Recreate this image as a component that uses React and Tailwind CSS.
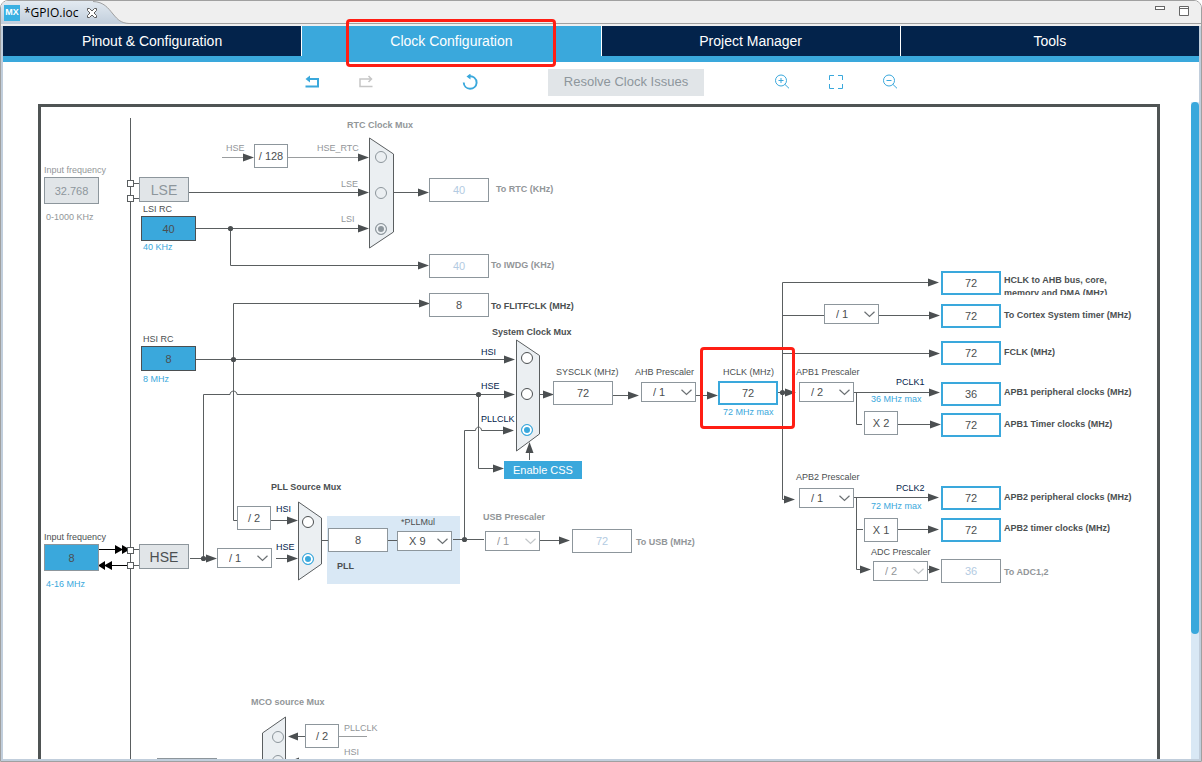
import { useState } from "react";

// top left corner of the diagram area, all node coordinates are relative to the window
const ORIGIN = { x: 41, y: 107 };
const at = (x, y) => ({ left: x - ORIGIN.x, top: y - ORIGIN.y });

const TABS = ["Pinout & Configuration", "Clock Configuration", "Project Manager", "Tools"];

const fieldTones = {
  output: "border-2 border-[#3aa8dc] bg-white text-[#4b4f51]",
  plain: "border border-[#8d969c] bg-white text-[#4b4f51]",
  disabled: "border border-[#8d969c] bg-white text-[#b3cbe2]",
  gray: "border border-[#8d969c] bg-[#e1e5e8] text-[#8d969c]",
  source: "border border-[#4b4f51] bg-[#3aa8dc] text-[#4b4f51]",
  external: "border border-[#8d969c] bg-[#3aa8dc] text-[#4b4f51]",
};

const fieldSizes = {
  output: "w-[60px] h-6",
  plain: "w-[60px] h-6",
  disabled: "w-[60px] h-6",
  gray: "w-[55px] h-[27px]",
  source: "w-[55px] h-[25px]",
  external: "w-[55px] h-[27px]",
};

const FIELDS = [
  { id: "lse-freq", x: 44, y: 177, value: "32.768", tone: "gray" },
  { id: "lsi", x: 141, y: 216, value: "40", tone: "source" },
  { id: "hsi", x: 141, y: 346, value: "8", tone: "source" },
  { id: "hse-freq", x: 44, y: 544, value: "8", tone: "external" },
  { id: "rtc", x: 429, y: 178, value: "40", tone: "disabled" },
  { id: "iwdg", x: 429, y: 254, value: "40", tone: "disabled" },
  { id: "flitfclk", x: 429, y: 293, value: "8", tone: "plain" },
  { id: "pll", x: 328, y: 528, value: "8", tone: "plain" },
  { id: "usb", x: 572, y: 529, value: "72", tone: "disabled" },
  { id: "sysclk", x: 553, y: 381, value: "72", tone: "plain" },
  { id: "hclk", x: 718, y: 381, value: "72", tone: "output" },
  { id: "ahb-bus", x: 941, y: 271, value: "72", tone: "output" },
  { id: "cortex", x: 941, y: 304, value: "72", tone: "output" },
  { id: "fclk", x: 941, y: 341, value: "72", tone: "output" },
  { id: "apb1-periph", x: 941, y: 382, value: "36", tone: "output" },
  { id: "apb1-timer", x: 941, y: 413, value: "72", tone: "output" },
  { id: "apb2-periph", x: 941, y: 486, value: "72", tone: "output" },
  { id: "apb2-timer", x: 941, y: 518, value: "72", tone: "output" },
  { id: "adc", x: 941, y: 559, value: "36", tone: "disabled" },
];

const SELECTS = [
  { id: "hse-div", x: 217, y: 548, value: "/ 1", name: "HSE divider" },
  { id: "pll-mul", x: 397, y: 531, value: "X 9" },
  { id: "usb-div", x: 485, y: 531, value: "/ 1", muted: true },
  { id: "ahb-div", x: 641, y: 382, value: "/ 1" },
  { id: "cortex-div", x: 824, y: 304, value: "/ 1", name: "Cortex prescaler" },
  { id: "apb1-div", x: 799, y: 382, value: "/ 2" },
  { id: "apb2-div", x: 799, y: 488, value: "/ 1" },
  { id: "adc-div", x: 873, y: 561, value: "/ 2", muted: true },
];

const FACTORS = [
  { x: 254, y: 144, text: "/ 128" },
  { x: 237, y: 506, text: "/ 2" },
  { x: 864, y: 411, text: "X 2" },
  { x: 864, y: 518, text: "X 1" },
  { x: 305, y: 724, text: "/ 2" },
];

const labelTones = {
  dark: "text-[#4b4f51]",
  muted: "text-[#929699]",
  navy: "text-[#03234b]",
  blue: "text-[#3aa8dc]",
  bold: "text-[#4b4f51] font-bold",
  boldMuted: "text-[#929699] font-bold",
};

const LABELS = [
  { x: 44, y: 164, text: "Input frequency", tone: "muted", htmlFor: "lse-freq" },
  { x: 46, y: 211, text: "0-1000 KHz", tone: "muted" },
  { x: 143, y: 203, text: "LSI RC", tone: "dark", htmlFor: "lsi" },
  { x: 143, y: 241, text: "40 KHz", tone: "blue" },
  { x: 143, y: 333, text: "HSI RC", tone: "dark", htmlFor: "hsi" },
  { x: 143, y: 373, text: "8 MHz", tone: "blue" },
  { x: 44, y: 531, text: "Input frequency", tone: "dark", htmlFor: "hse-freq" },
  { x: 46, y: 578, text: "4-16 MHz", tone: "blue" },
  { x: 226, y: 142, text: "HSE", tone: "muted" },
  { x: 317, y: 142, text: "HSE_RTC", tone: "muted" },
  { x: 341, y: 178, text: "LSE", tone: "muted" },
  { x: 341, y: 213, text: "LSI", tone: "muted" },
  { x: 347, y: 119, text: "RTC Clock Mux", tone: "boldMuted" },
  { x: 496, y: 183, text: "To RTC (KHz)", tone: "boldMuted", htmlFor: "rtc" },
  { x: 491, y: 259, text: "To IWDG (KHz)", tone: "boldMuted", htmlFor: "iwdg" },
  { x: 491, y: 300, text: "To FLITFCLK (MHz)", tone: "bold", htmlFor: "flitfclk" },
  { x: 492, y: 326, text: "System Clock Mux", tone: "bold" },
  { x: 481, y: 346, text: "HSI", tone: "navy" },
  { x: 481, y: 380, text: "HSE", tone: "navy" },
  { x: 481, y: 413, text: "PLLCLK", tone: "navy" },
  { x: 556, y: 366, text: "SYSCLK (MHz)", tone: "dark", htmlFor: "sysclk" },
  { x: 635, y: 366, text: "AHB Prescaler", tone: "dark", htmlFor: "ahb-div" },
  { x: 723, y: 366, text: "HCLK (MHz)", tone: "dark", htmlFor: "hclk" },
  { x: 723, y: 406, text: "72 MHz max", tone: "blue" },
  { x: 796, y: 366, text: "APB1 Prescaler", tone: "dark", htmlFor: "apb1-div" },
  { x: 896, y: 376, text: "PCLK1", tone: "navy" },
  { x: 871, y: 393, text: "36 MHz max", tone: "blue" },
  { x: 796, y: 471, text: "APB2 Prescaler", tone: "dark", htmlFor: "apb2-div" },
  { x: 896, y: 482, text: "PCLK2", tone: "navy" },
  { x: 871, y: 500, text: "72 MHz max", tone: "blue" },
  { x: 871, y: 546, text: "ADC Prescaler", tone: "dark", htmlFor: "adc-div" },
  { x: 1004, y: 309, text: "To Cortex System timer (MHz)", tone: "bold", htmlFor: "cortex" },
  { x: 1004, y: 346, text: "FCLK (MHz)", tone: "bold", htmlFor: "fclk" },
  { x: 1004, y: 386, text: "APB1 peripheral clocks (MHz)", tone: "bold", htmlFor: "apb1-periph" },
  { x: 1004, y: 418, text: "APB1 Timer clocks (MHz)", tone: "bold", htmlFor: "apb1-timer" },
  { x: 1004, y: 491, text: "APB2 peripheral clocks (MHz)", tone: "bold", htmlFor: "apb2-periph" },
  { x: 1004, y: 522, text: "APB2 timer clocks (MHz)", tone: "bold", htmlFor: "apb2-timer" },
  { x: 1004, y: 566, text: "To ADC1,2", tone: "boldMuted", htmlFor: "adc" },
  { x: 271, y: 481, text: "PLL Source Mux", tone: "bold" },
  { x: 276, y: 503, text: "HSI", tone: "navy" },
  { x: 276, y: 541, text: "HSE", tone: "navy" },
  { x: 401, y: 516, text: "*PLLMul", tone: "dark", htmlFor: "pll-mul" },
  { x: 337, y: 560, text: "PLL", tone: "bold", htmlFor: "pll" },
  { x: 483, y: 511, text: "USB Prescaler", tone: "boldMuted", htmlFor: "usb-div" },
  { x: 636, y: 536, text: "To USB (MHz)", tone: "boldMuted", htmlFor: "usb" },
  { x: 251, y: 696, text: "MCO source Mux", tone: "boldMuted" },
  { x: 344, y: 722, text: "PLLCLK", tone: "muted" },
  { x: 344, y: 746, text: "HSI", tone: "muted" },
];

const MUXES = [
  {
    name: "rtc",
    muted: true,
    selected: "LSI",
    inputs: [
      { id: "HSE_RTC", x: 375, y: 151 },
      { id: "LSE", x: 375, y: 187 },
      { id: "LSI", x: 375, y: 223 },
    ],
  },
  {
    name: "system",
    selected: "PLLCLK",
    inputs: [
      { id: "HSI", x: 521, y: 352 },
      { id: "HSE", x: 521, y: 388 },
      { id: "PLLCLK", x: 521, y: 424 },
    ],
  },
  {
    name: "pll-source",
    selected: "HSE",
    inputs: [
      { id: "HSI", x: 302, y: 516 },
      { id: "HSE", x: 302, y: 553 },
    ],
  },
  {
    name: "mco",
    muted: true,
    inputs: [
      { id: "PLLCLK", x: 272, y: 731 },
      { id: "HSI", x: 272, y: 755 },
    ],
  },
];

// tips of the arrows that point to the right
const ARROWS = [
  [254, 157], [369, 157], [369, 192], [369, 228], [429, 192], [429, 265], [430, 303],
  [515, 359], [515, 394], [514, 430], [504, 468], [217, 558], [298, 558], [298, 520],
  [570, 540], [554, 394], [639, 395], [718, 395], [796, 392], [795, 499], [939, 282],
  [940, 315], [940, 353], [940, 392], [941, 424], [939, 497], [939, 529], [871, 569],
  [940, 569],
];

const DOTS = [
  [230, 228], [233, 359], [478, 394], [203, 558], [464, 539], [782, 392],
];

function Wires() {
  return (
    <svg
      className="absolute top-0 left-0"
      width="1116"
      height="655"
      viewBox="41 107 1116 655"
      fill="none"
      aria-hidden="true"
    >
      <rect x="327" y="516" width="133" height="68" fill="#d9e8f5" />

      <g stroke="#5a5e60" strokeWidth="1">
        <path d="M130.5 118V762" />
        <path d="M222 157.5H250M288 157.5H365" stroke="#9a9d9f" />
        <path d="M189 192.5H365M196 228.5H365M230.5 228.5V265.5H425M394 192.5H425" />
        <path d="M196 359.5H511M233.5 359.5V303.5H426M233.5 359.5V520.5H237" />
        <path d="M203.5 558.5V394.5H230C230 390 237 390 237 394.5H511M478.5 394.5V468.5H500" />
        <path d="M464.5 539.5V430.5H475.5C475.5 426 481.5 426 481.5 430.5H510" />
        <path d="M190 558.5H213M271 520.5H294M276 558.5H294M322 540.5H328M388 540.5H397M453 539.5H484M540 540.5H566" />
        <path d="M540 394.5H550M613 395.5H635M696 395.5H714M778 392.5H792" />
        <path d="M935 282.5H782.5V499.5H791M782 315.5H824M879 315.5H936M782 353.5H936" />
        <path d="M854 392.5H936M856.5 392.5V424.5H862M898 424.5H937" />
        <path d="M854 497.5H935M856.5 497.5V569.5H867M856 529.5H863M898 529.5H935M928 569.5H936" />
        <path d="M529.5 460V446M292 736.5H305" />
        <path d="M339 736.5H367" stroke="#9a9d9f" />
        <path d="M157 758.5H217" stroke="#8d969c" />
      </g>

      {/* crystal pins */}
      <path d="M99 549.5H127M104 565.5H127" stroke="#000" />
      <path d="M134 549.5H139M134 565.5H139M134 183.5H139M134 198.5H139" stroke="#5a5e60" />
      <g fill="#000">
        <path d="M115 545V554L123 549.5ZM122 545V554L130 549.5Z" />
        <path d="M105 561V570L98 565.5ZM112 561V570L104 565.5Z" />
      </g>
      <g fill="#fff" stroke="#5a5e60">
        <rect x="127.5" y="180.5" width="6" height="6" />
        <rect x="127.5" y="195.5" width="6" height="6" />
        <rect x="127.5" y="547.5" width="6" height="6" />
        <rect x="127.5" y="562.5" width="6" height="6" />
      </g>

      {/* mux bodies */}
      <g fill="#ebeff2" stroke="#5a5e60">
        <path d="M369.5 138L393.5 154V232L369.5 248Z" />
        <path d="M516.5 340L539.5 355.5V434L516.5 451Z" />
        <path d="M298.5 502L321.5 518V564L298.5 580Z" />
        <path d="M285.5 717L262.5 733V765H285.5Z" />
      </g>

      <g fill="#4b4f51">
        {ARROWS.map(([x, y]) => (
          <path key={`${x}-${y}`} d={`M${x} ${y + 0.5}l-11 -4v8z`} />
        ))}
        <path d="M529.5 442l-4 11h8z" />
        <path d="M288 736.5l10 -4v8z" />
        <path d="M289 761.5l10 -4v8z" />
        {DOTS.map(([x, y]) => (
          <circle key={`${x}-${y}`} cx={x + 0.5} cy={y + 0.5} r="2.6" />
        ))}
      </g>
    </svg>
  );
}

function Field({ id, x, y, value, tone }) {
  return (
    <input
      id={id}
      type="text"
      defaultValue={value}
      style={at(x, y)}
      className={`absolute rounded-none p-0 text-center text-[11px] leading-4 outline-none ${fieldSizes[tone]} ${fieldTones[tone]}`}
    />
  );
}

function Prescaler({ id, x, y, value, name, muted }) {
  return (
    <div style={at(x, y)} className="absolute h-5 w-[55px]">
      <select
        id={id}
        aria-label={name}
        defaultValue={value}
        className={`block h-full w-full appearance-none rounded-none border border-[#8d969c] bg-white pl-[11px] text-[11px] leading-4 outline-none ${
          muted ? "text-[#929699]" : "text-[#4b4f51]"
        }`}
      >
        <option>{value}</option>
      </select>
      <svg
        className="pointer-events-none absolute top-[7px] right-1"
        width="11"
        height="7"
        viewBox="0 0 11 7"
        fill="none"
        stroke={muted ? "#c3c7ca" : "#6b7073"}
        strokeWidth="1.2"
      >
        <path d="M0.5 0.8L5.5 5.5L10.5 0.8" />
      </svg>
    </div>
  );
}

function Mux({ name, inputs, selected, muted }) {
  const [value, setValue] = useState(selected);

  return inputs.map((input) => (
    <input
      key={input.id}
      type="radio"
      name={name}
      aria-label={`${name} ${input.id}`}
      checked={value === input.id}
      onChange={() => setValue(input.id)}
      style={at(input.x, input.y)}
      className={`absolute size-3 appearance-none rounded-full border ${
        muted
          ? "border-[#8d969c] checked:bg-[#8d969c] checked:shadow-[inset_0_0_0_2px_#ebeff2]"
          : "border-[#4b4f51] bg-white checked:border-[#3aa8dc] checked:bg-[#3aa8dc] checked:shadow-[inset_0_0_0_2px_white]"
      }`}
    />
  ));
}

function ClockTree() {
  return (
    <div className="relative h-full overflow-hidden border-[3px] border-b-0 border-[#4f5454]">
      <Wires />

      {LABELS.map((label) => {
        const Tag = label.htmlFor ? "label" : "span";
        return (
          <Tag
            key={`${label.x}-${label.y}`}
            htmlFor={label.htmlFor}
            style={at(label.x, label.y)}
            className={`absolute whitespace-nowrap text-[9px] leading-3 ${labelTones[label.tone]}`}
          >
            {label.text}
          </Tag>
        );
      })}
      <label
        htmlFor="ahb-bus"
        style={at(1004, 274)}
        className="absolute h-[21px] w-[120px] overflow-hidden text-[9px] leading-[13px] font-bold text-[#4b4f51]"
      >
        HCLK to AHB bus, core, memory and DMA (MHz)
      </label>

      <div
        style={at(139, 177)}
        className="absolute flex h-[25px] w-[50px] items-center justify-center border border-[#8d969c] bg-[#e1e5e8] text-sm text-[#8d969c]"
      >
        LSE
      </div>
      <div
        style={at(139, 544)}
        className="absolute flex h-[25px] w-[50px] items-center justify-center border border-[#8d969c] bg-[#e1e5e8] text-sm text-[#4b4f51]"
      >
        HSE
      </div>

      {FACTORS.map((factor) => (
        <div
          key={`${factor.x}-${factor.y}`}
          style={at(factor.x, factor.y)}
          className="absolute flex h-6 w-[34px] items-center justify-center border border-[#8d969c] bg-white text-[11px] text-[#4b4f51]"
        >
          {factor.text}
        </div>
      ))}

      {FIELDS.map((field) => (
        <Field key={field.id} {...field} />
      ))}
      {SELECTS.map((select) => (
        <Prescaler key={select.id} {...select} />
      ))}
      {MUXES.map((mux) => (
        <Mux key={mux.name} {...mux} />
      ))}

      <button
        type="button"
        style={at(504, 461)}
        className="absolute h-[18px] w-[78px] bg-[#3aa8dc] text-[11px] leading-[18px] text-white"
      >
        Enable CSS
      </button>

      {/* HCLK highlight */}
      <div
        style={at(700, 347)}
        className="pointer-events-none absolute h-[82px] w-[95px] rounded-[4px] border-[3px] border-[#ff1e14]"
      />
    </div>
  );
}

function EditorTab() {
  return (
    <div className="relative flex h-[23px] w-[130px] items-center pl-[3px]">
      <svg className="absolute top-0 left-0" width="130" height="23" viewBox="0 0 130 23" fill="none">
        <defs>
          <linearGradient id="editor-tab" x1="0" y1="0" x2="0" y2="1">
            <stop offset="0" stopColor="#e3eaf1" />
            <stop offset="1" stopColor="#c1cedc" />
          </linearGradient>
        </defs>
        <path
          d="M0 23V0H94C103 1 107 7 112 13C117 19 120 22 128 22.5V23Z"
          fill="url(#editor-tab)"
        />
        <path d="M92 0.5C103 1 107 7 112 13C117 19 120 22 128 22.5" stroke="#a0a0a0" />
      </svg>
      <span className="relative flex size-4 items-center justify-center bg-[#3ab0e2] text-[9px] font-bold text-white">
        MX
      </span>
      <span className="relative ml-1 font-['Open_Sans',sans-serif] text-xs text-black">
        *GPIO.ioc
      </span>
      <button type="button" aria-label="Close" className="relative ml-2">
        <svg width="12" height="12" viewBox="0 0 12 12" fill="#fff" stroke="#5c5c5c">
          <path d="M1.5 1.5H3.5L6 4L8.5 1.5H10.5V3.5L8 6L10.5 8.5V10.5H8.5L6 8L3.5 10.5H1.5V8.5L4 6L1.5 3.5Z" />
        </svg>
      </button>
    </div>
  );
}

function TitleBar() {
  return (
    <header className="flex h-[25px] items-start bg-[#efefef]">
      <div className="flex h-[23px] flex-1 justify-between border-b border-[#a0a0a0]">
        <EditorTab />
        <div className="flex items-start gap-3 pt-1 pr-[11px]">
          <button type="button" aria-label="Minimize">
            <svg width="12" height="12" viewBox="0 0 12 12" fill="#fff" stroke="#666">
              <rect x="1.5" y="1.5" width="9" height="3" />
            </svg>
          </button>
          <button type="button" aria-label="Maximize">
            <svg width="12" height="12" viewBox="0 0 12 12" fill="#fff" stroke="#666">
              <path d="M1.5 1.5H10.5V10.5H1.5ZM1.5 3.5H10.5" />
            </svg>
          </button>
        </div>
      </div>
    </header>
  );
}

function Toolbar() {
  return (
    <div className="flex h-10 items-center justify-center text-[#3aa8dc]">
      <button type="button" aria-label="Undo" className="size-4">
        <svg width="16" height="16" viewBox="0 0 16 16" fill="none" stroke="currentColor" strokeWidth="2">
          <path d="M3 5H14V12.5H1.5" />
          <path d="M6 1.5L1.5 5L6 8.5Z" fill="currentColor" stroke="none" />
        </svg>
      </button>
      <button type="button" aria-label="Redo" className="ml-[38px] size-4 text-[#c6c6c6]">
        <svg width="16" height="16" viewBox="0 0 16 16" fill="none" stroke="currentColor" strokeWidth="1.5">
          <path d="M13.500 5H2V12.5H14.5M10.500 2L13.500 5L10.500 8" />
        </svg>
      </button>
      <button type="button" aria-label="Refresh" className="ml-[88px] size-4">
        <svg width="16" height="16" viewBox="0 0 16 16" fill="none" stroke="currentColor" strokeWidth="1.9">
          <path d="M6.5 2.5C11 1.3 14.8 4.6 14.6 8.8C14.3 12.3 11.5 14.7 8 14.7C4.5 14.7 1.9 12 1.7 8.5" />
          <path d="M8.5 -0.5V5.5L4.5 2.5Z" fill="currentColor" stroke="none" />
        </svg>
      </button>
      <button
        type="button"
        className="mx-[70px] h-[27px] w-[156px] bg-[#e1e5e8] text-[13px] text-[#8d969c]"
      >
        Resolve Clock Issues
      </button>
      <button type="button" aria-label="Zoom in" className="size-4">
        <svg width="16" height="16" viewBox="0 0 16 16" fill="none" stroke="currentColor">
          <circle cx="7" cy="6.5" r="5.5" />
          <path d="M4.5 6.5H9.5M7 4V9M10.8 10.3L15 14.3" />
        </svg>
      </button>
      <button type="button" aria-label="Fit to window" className="ml-[38px] size-4">
        <svg width="16" height="16" viewBox="0 0 16 16" fill="none" stroke="currentColor">
          <path d="M1.5 6V1.5H6M10 1.5H14.5V6M14.5 10V14.5H10M6 14.5H1.5V10" />
        </svg>
      </button>
      <button type="button" aria-label="Zoom out" className="ml-[38px] size-4">
        <svg width="16" height="16" viewBox="0 0 16 16" fill="none" stroke="currentColor">
          <circle cx="7" cy="6.5" r="5.5" />
          <path d="M4.5 6.5H9.5M10.8 10.3L15 14.3" />
        </svg>
      </button>
    </div>
  );
}

const App = () => {
  const [activeTab, setActiveTab] = useState("Clock Configuration");

  return (
    <div className="flex h-screen flex-col overflow-hidden rounded-t-lg border border-[#a0a0a0] bg-white font-['Liberation_Sans',Arial,sans-serif]">
      <TitleBar />

      <div className="flex min-h-0 flex-1 flex-col border-x-2 border-b-2 border-[#c1cedc]">
        <nav className="flex bg-[#3aa8dc] pb-1.5">
          {TABS.map((tab) => (
            <div
              key={tab}
              className="relative flex h-[30px] flex-1 border-r border-white last:border-r-0"
            >
              <button
                type="button"
                onClick={() => setActiveTab(tab)}
                className={`flex-1 text-sm text-white ${
                  activeTab === tab ? "bg-[#3aa8dc]" : "bg-[#03234b]"
                }`}
              >
                {tab}
              </button>
              {tab === "Clock Configuration" && (
                <span className="pointer-events-none absolute -top-[7px] left-1/2 z-10 h-12 w-[210px] -translate-x-1/2 rounded-[4px] border-[3px] border-[#ff1e14]" />
              )}
            </div>
          ))}
        </nav>

        <Toolbar />

        <div className="flex min-h-0 flex-1">
          <main className="min-w-0 flex-1 pt-0.5 pr-[31px] pl-[35px]">
            <ClockTree />
          </main>
          <div className="w-2 bg-[#d9e8f5]">
            <div className="h-[81%] rounded-full bg-[#3aa8dc]" />
          </div>
        </div>
      </div>
    </div>
  );
};

export default App;
